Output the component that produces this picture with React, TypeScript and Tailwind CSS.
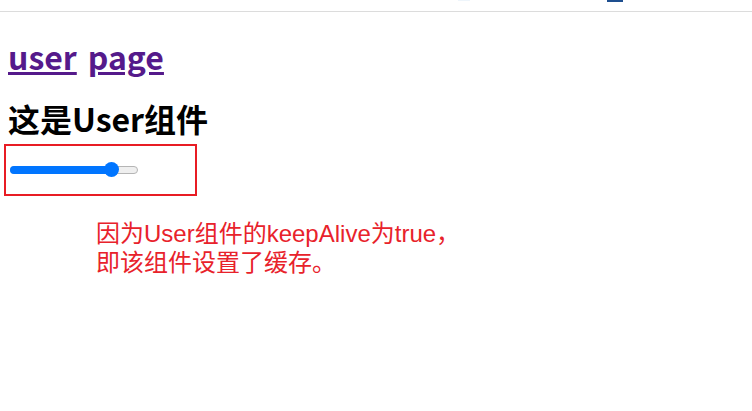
export default function App() {
  const font = { fontFamily: '"Noto Sans CJK SC", "Noto Sans", sans-serif' };
  return (
    <div className="w-[752px] h-[411px] bg-white overflow-hidden" style={font}>
      <div className="relative h-[12px] border-b border-[#dcdcdc]">
        <div className="absolute left-[458px] top-0 w-[12px] h-[1px] bg-[#eef5fb]" />
        <div className="absolute left-[607px] top-0 w-[16px] h-[2px] bg-[#1e4f8f]" />
      </div>
      <div className="px-2">
        <div className="mt-[24px] flex gap-[11px] text-[32px] font-bold leading-[40px]">
          <a href="#" className="text-[#551a8b] underline">user</a>
          <a href="#" className="text-[#551a8b] underline">page</a>
        </div>
        <h2 className="mt-[22px] text-[32px] font-bold leading-[40px] text-black">这是User组件</h2>
      </div>
      <div className="ml-[4px] mt-[6px] w-[193px] h-[52px] border-2 border-[#e81c24] flex items-center pl-[4px]">
        <div className="relative w-[128px] h-[8px]">
          <div className="absolute inset-0 rounded-full bg-[#efefef] border border-[#b5b5b5]" />
          <div className="absolute left-0 top-0 h-[8px] w-[104px] rounded-full bg-[#0075ff]" />
          <div className="absolute left-[94px] top-[-4px] w-[15px] h-[15px] rounded-full bg-[#0075ff]" />
        </div>
      </div>
      <div
        className="ml-[96px] mt-[23px] text-[24px] leading-[29px] text-[#e8222b]"
        style={{ fontFamily: '"Liberation Sans", "Noto Sans CJK SC", sans-serif' }}
      >
        <div>因为User组件的keepAlive为true，</div>
        <div>即该组件设置了缓存。</div>
      </div>
    </div>
  );
}
